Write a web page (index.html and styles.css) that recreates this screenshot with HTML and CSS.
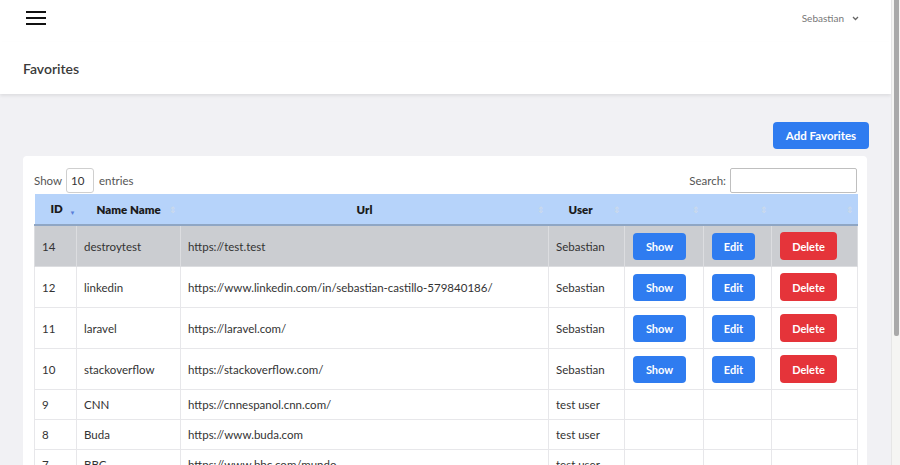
FILE: index.html
```html
<!DOCTYPE html>
<html>
<head>
<meta charset="utf-8">
<link rel="stylesheet" href="styles.css">
</head>
<body>
<div class="app">
  <div class="main">
    <nav class="navbar">
      <svg class="burger" width="20" height="16" viewBox="0 0 20 16"><path d="M0 2h20M0 8h20M0 14h20" stroke="#111" stroke-width="2.2"/></svg>
      <div class="user">Sebastian <svg width="7" height="5" viewBox="0 0 7 5"><path d="M1 1l2.5 2.5L6 1" stroke="#666" stroke-width="1.3" fill="none"/></svg></div>
    </nav>
    <header class="page-header">Favorites</header>
    <section class="content">
      <div class="actions"><button class="btn btn-blue btn-add">Add Favorites</button></div>
      <div class="card">
        <div class="controls">
          <label class="length">Show <span class="select">10</span> entries</label>
          <label class="search">Search: <span class="input"></span></label>
        </div>
        <table class="table">
          <colgroup>
            <col style="width:42px"><col style="width:104px"><col style="width:368px"><col style="width:76px"><col style="width:79px"><col style="width:68px"><col style="width:86px">
          </colgroup>
          <thead>
            <tr>
              <th class="sorted">ID <span class="arrow-down">▼</span></th>
              <th class="sort">Name Name</th>
              <th class="sort center">Url</th>
              <th class="sort">User</th>
              <th class="sort"></th>
              <th class="sort"></th>
              <th class="sort"></th>
            </tr>
          </thead>
          <tbody>
            <tr class="hover"><td>14</td><td>destroytest</td><td>https://test.test</td><td>Sebastian</td><td><button class="btn btn-blue btn-show">Show</button></td><td><button class="btn btn-blue btn-edit">Edit</button></td><td><button class="btn btn-red btn-del">Delete</button></td></tr>
            <tr><td>12</td><td>linkedin</td><td>https://www.linkedin.com/in/sebastian-castillo-579840186/</td><td>Sebastian</td><td><button class="btn btn-blue btn-show">Show</button></td><td><button class="btn btn-blue btn-edit">Edit</button></td><td><button class="btn btn-red btn-del">Delete</button></td></tr>
            <tr><td>11</td><td>laravel</td><td>https://laravel.com/</td><td>Sebastian</td><td><button class="btn btn-blue btn-show">Show</button></td><td><button class="btn btn-blue btn-edit">Edit</button></td><td><button class="btn btn-red btn-del">Delete</button></td></tr>
            <tr><td>10</td><td>stackoverflow</td><td>https://stackoverflow.com/</td><td>Sebastian</td><td><button class="btn btn-blue btn-show">Show</button></td><td><button class="btn btn-blue btn-edit">Edit</button></td><td><button class="btn btn-red btn-del">Delete</button></td></tr>
            <tr><td>9</td><td>CNN</td><td>https://cnnespanol.cnn.com/</td><td>test user</td><td></td><td></td><td></td></tr>
            <tr><td>8</td><td>Buda</td><td>https://www.buda.com</td><td>test user</td><td></td><td></td><td></td></tr>
            <tr><td>7</td><td>BBC</td><td>https://www.bbc.com/mundo</td><td>test user</td><td></td><td></td><td></td></tr>
          </tbody>
        </table>
      </div>
    </section>
  </div>
  <div class="scrollbar"><div class="thumb"></div></div>
</div>
</body>
</html>
```

FILE: styles.css
```css
* { box-sizing: border-box; }
html, body { margin: 0; padding: 0; height: 100%; overflow: hidden; }
body {
  font-family: "Lato", "Noto Sans", sans-serif;
  font-size: 12px;
  color: #333;
  background: #f1f1f4;
}
.app { display: flex; height: 465px; }
.main { flex: 1; min-width: 0; overflow: hidden; }
.scrollbar {
  width: 9px;
  background: #f5f5f3;
  border-left: 1px solid #e6e6e6;
  display: flex;
  flex-direction: column;
  align-items: center;
}
.thumb { width: 5px; height: 336px; background: #a9a9a9; border-radius: 0 0 2px 2px; }

.navbar {
  height: 43px;
  background: #fff;
  border-bottom: 1px solid #f2f0e4;
  display: flex;
  align-items: center;
  justify-content: space-between;
  padding: 0 32px 0 26px;
}
.burger { display: block; margin-top: -6px; }
.user { font-size: 10px; color: #777; display: flex; align-items: center; gap: 8px; margin-top: -6px; }

.page-header {
  height: 52px;
  background: #fff;
  padding: 0 23px;
  display: flex;
  align-items: center;
  font-size: 14px;
  font-weight: 600;
  color: #3a3a3a;
  box-shadow: 0 2px 3px rgba(0,0,0,0.08);
  margin-top: -1px;
  padding-top: 1px;
}
.content { padding: 28px 24px 0 23px; }
.actions { display: flex; justify-content: flex-end; margin-right: -2px; }
.btn {
  border: none;
  color: #fff;
  font-family: inherit;
  font-weight: 700;
  font-size: 11px;
  border-radius: 4px;
  padding: 0;
  cursor: pointer;
  display: block;
}
.btn-blue { background: #2f7cf0; }
.btn-red { background: #e5343a; }
.btn-add { width: 96px; height: 27px; font-size: 11.5px; }
.card {
  margin-top: 7px;
  background: #fff;
  border-radius: 4px;
  padding: 10px 10px 0 11px;
}
.controls { display: flex; justify-content: space-between; align-items: center; height: 28px; margin-bottom: 0; }
.length, .search { display: flex; align-items: center; gap: 4px; color: #555; font-size: 11.5px; }
.select {
  width: 28px; height: 25px;
  border: 1px solid #cfcfcf; border-radius: 3px;
  display: flex; align-items: center; padding-left: 4px;
  color: #333; margin-right: 1px;
}
.input { width: 127px; height: 25px; border: 1px solid #bfbfbf; border-radius: 2px; display: block; }

.table { border-collapse: collapse; width: 823px; table-layout: fixed; }
.table th {
  background: #b6d3fa;
  height: 31px;
  font-weight: 800;
  font-size: 11.5px;
  color: #1b1b1b;
  text-align: left;
  padding: 0 0 0 20px;
  border-bottom: 2px solid #8fa6c4;
  position: relative;
  white-space: nowrap;
}
.table th.center { text-align: center; padding-left: 0; }
.table th.sorted { padding-left: 16px; }
.arrow-down { color: #5a7ed8; font-size: 6px; margin-left: 4px; vertical-align: -2px; }
.table th.sort::after {
  content: "⇕";
  position: absolute;
  right: 4px;
  top: 10px;
  font-size: 9px;
  color: #d0dbe8;
  font-weight: 400;
}
.table td {
  border: 1px solid #e7e7ea;
  padding: 6px 7px;
  height: 30px;
  line-height: 17px;
  color: #333;
  white-space: nowrap;
  overflow: hidden;
  font-size: 11.5px;
}
.table tr:first-child td { border-top: none; }
.table tr.hover td { background: #cbcdd1; border-color: #dcdde0; }
.btn-show { width: 53px; height: 27px; margin-left: 1px; }
.btn-edit { width: 43px; height: 27px; margin-left: 1px; }
.btn-del { width: 57px; height: 28px; margin-left: 1px; }
```
